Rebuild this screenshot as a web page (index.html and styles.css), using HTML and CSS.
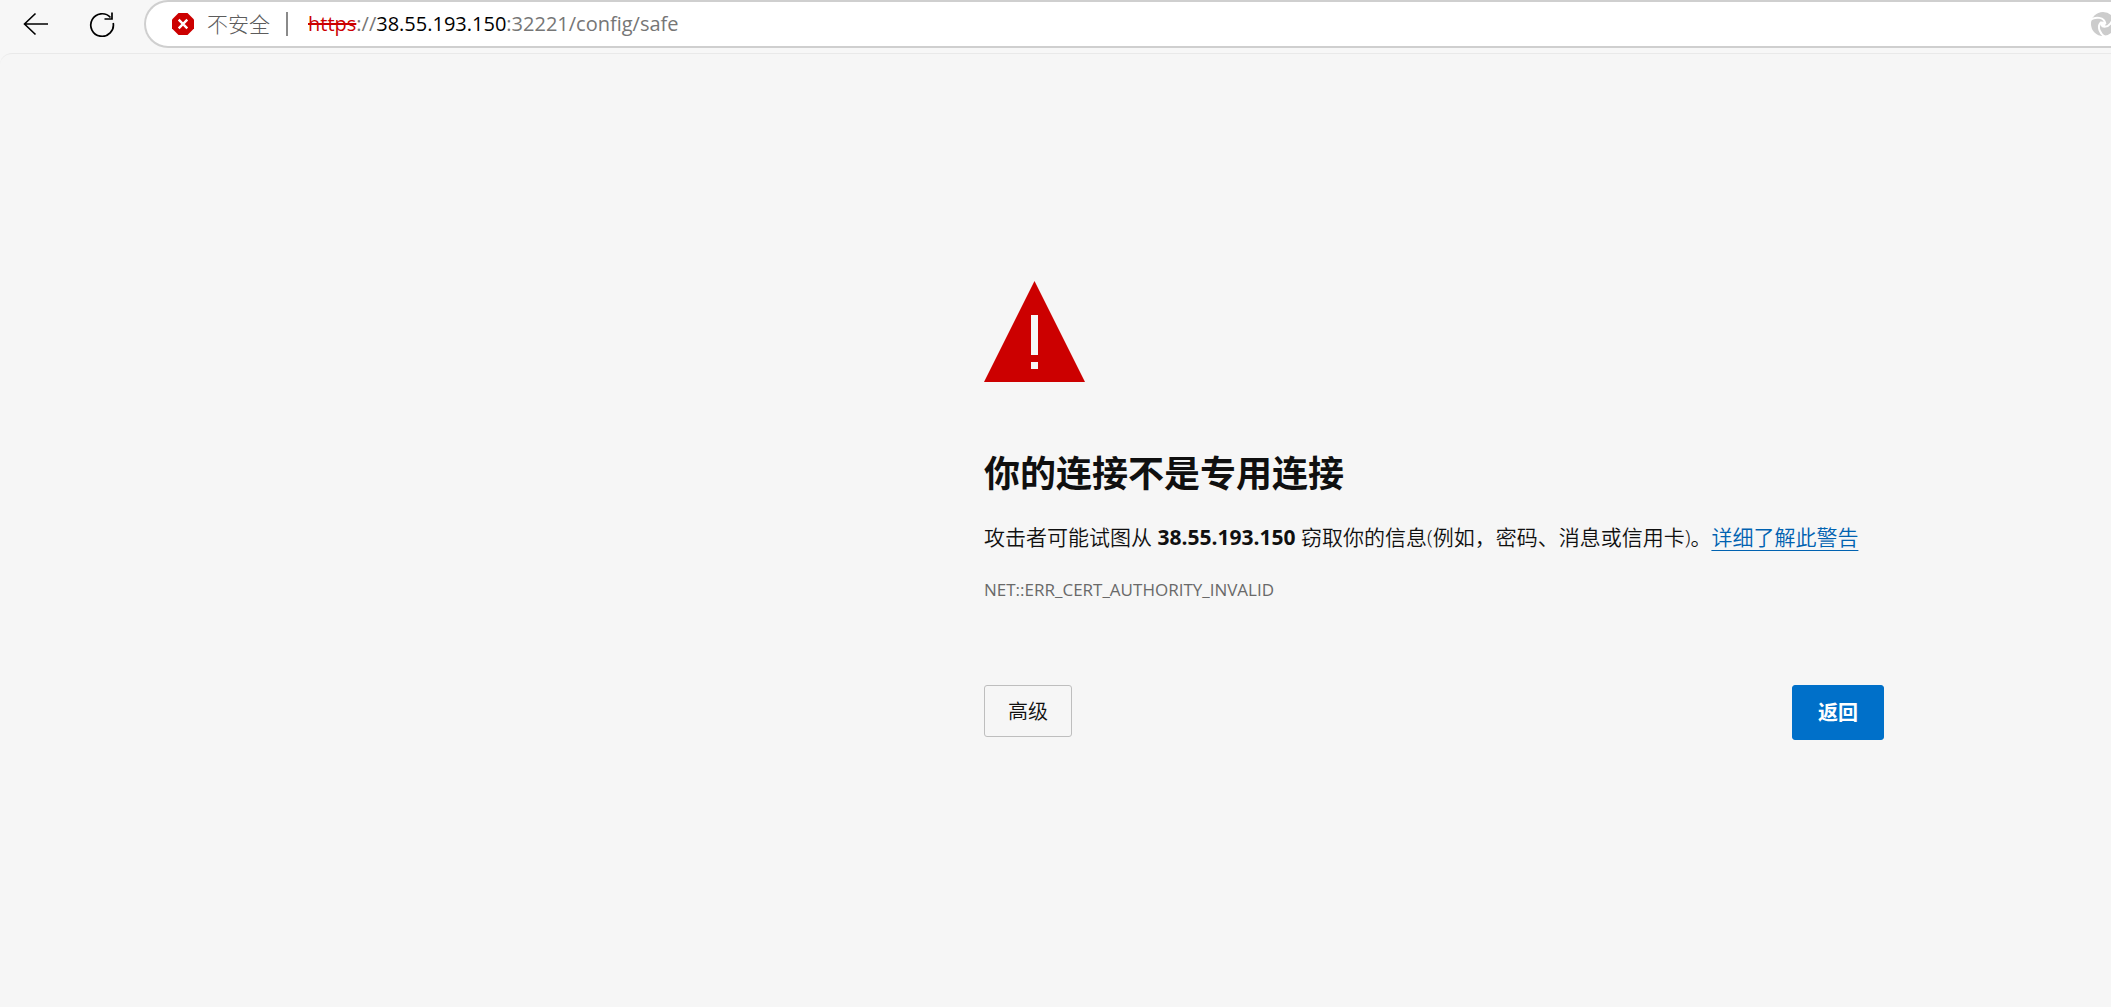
FILE: index.html
```
<!DOCTYPE html>
<html lang="zh-CN">
<head>
  <meta charset="UTF-8" />
  <meta name="viewport" content="width=device-width, initial-scale=1.0"/>
  <title>隐私错误</title>
  <link rel="stylesheet" href="styles.css">
</head>
<body>

  <header class="toolbar">
    <button class="nav-button" type="button" aria-label="后退">
      <svg width="26" height="26" viewBox="0 0 26 26" fill="none" stroke="#000" stroke-width="1.6">
        <path d="M12.5 2.5 1.5 13l11 10.5M1.5 13H25"/>
      </svg>
    </button>
    <button class="nav-button" type="button" aria-label="刷新">
      <svg width="26" height="26" viewBox="0 0 26 26" fill="none" stroke="#000" stroke-width="1.7">
        <path d="M24.2 12A11.3 11.3 0 1 1 21.5 6.5M23 1.5V8h-7.5"/>
      </svg>
    </button>

    <div class="address-bar">
      <button class="security" type="button">
        <svg width="22" height="22" viewBox="0 0 22 22">
          <path fill="#c00" d="M6.5 0h9L22 6.5v9L15.5 22h-9L0 15.5v-9z"/>
          <path stroke="#fff" stroke-width="2.4" d="m6.7 6.7 8.6 8.6m0-8.6-8.6 8.6"/>
        </svg>
        <span>不安全</span>
      </button>
      <div class="url" role="textbox" aria-label="地址" contenteditable="true" spellcheck="false"><span class="scheme">https</span>://<span class="host">38.55.193.150</span>:32221/config/safe</div>
      <!-- cut off by the window edge -->
      <svg class="swirl" width="24" height="24" viewBox="0 0 24 24">
        <circle cx="12" cy="12" r="12" fill="#ccc"/>
        <g fill="none" stroke="#fff" stroke-width="2">
          <path d="M-1 8C4 4.5 13.5 4.5 14.5 12"/>
          <path d="M-1 8C4 4.5 13.5 4.5 14.5 12" transform="rotate(120 12 12)"/>
          <path d="M-1 8C4 4.5 13.5 4.5 14.5 12" transform="rotate(240 12 12)"/>
        </g>
        <circle cx="12" cy="12" r="2.6" fill="#fff"/>
      </svg>
    </div>
  </header>

  <main class="page">
    <div class="interstitial">
      <svg class="warning-icon" width="101" height="101" viewBox="0 0 101 101">
        <path fill="#c00" d="M50.5 0 101 101H0z"/>
        <path fill="#f6f6f6" d="M47 34h7v40h-7zM47 81h7v7h-7z"/>
      </svg>
      <h1>你的连接不是专用连接</h1>
      <p class="message">攻击者可能试图从 <strong>38.55.193.150</strong> 窃取你的信息(例如，密码、消息或信用卡)。<a href="#">详细了解此警告</a></p>
      <p class="error-code">NET::ERR_CERT_AUTHORITY_INVALID</p>
      <div class="actions">
        <button class="btn" type="button">高级</button>
        <button class="btn btn-primary" type="button">返回</button>
      </div>
    </div>
  </main>

</body>
</html>
```
FILE: styles.css
```
* {
  box-sizing: border-box;
}

body {
  margin: 0;
  min-height: 100vh;
  display: flex;
  flex-direction: column;
  overflow-x: hidden;
  background: #f7f7f7;
  color: #101010;
  font-family: "Open Sans", "Noto Sans CJK SC", sans-serif;
}

button {
  font-family: inherit;
  cursor: pointer;
}

svg {
  display: block;
  flex-shrink: 0;
}

.toolbar {
  display: flex;
  align-items: center;
  height: 48px;
  padding-left: 23px;
  margin-bottom: 5px;
}

.nav-button {
  padding: 0;
  margin-right: 40px;
  border: none;
  background: none;
}

.nav-button + .address-bar {
  margin-left: -11px;
}

.address-bar {
  flex: 1;
  display: flex;
  align-items: center;
  height: 48px;
  padding-left: 26px;
  border: 2px solid #cfcfcf;
  border-right: none;
  border-radius: 24px 0 0 24px;
  background: #fff;
  overflow: hidden;
}

.security {
  display: flex;
  align-items: center;
  gap: 13px;
  height: 24px;
  padding: 0 16px 0 0;
  border: none;
  border-right: 2px solid #8a8a8a;
  background: none;
  color: #5c5c5c;
  font-size: 21px;
  font-weight: 300;
  line-height: 24px;
}

.url {
  flex: 1;
  padding-left: 20px;
  color: #767676;
  font-size: 20px;
  line-height: 28px;
  white-space: nowrap;
  outline: none;
}

.scheme {
  color: #c00;
  text-decoration: line-through;
  text-decoration-thickness: 2px;
}

.host {
  color: #000;
}

.swirl {
  margin-right: -4px;
}

.page {
  flex: 1;
  padding: 227px 227px 40px 40px;
  border-top: 1px solid #e9e9e9;
  border-radius: 12px 0 0 0;
  background: #f6f6f6;
}

.interstitial {
  max-width: 900px;
  margin-left: auto;
}

h1 {
  margin: 68px 0 24px;
  font-size: 36px;
  line-height: 48px;
}

p {
  margin: 0;
}

.message {
  font-size: 21px;
  font-weight: 350;
  line-height: 30px;
}

.message strong {
  font-weight: 700;
}

.message a {
  color: #0062b1;
  text-decoration: underline;
  text-decoration-thickness: 1px;
  text-underline-offset: 5px;
}

.error-code {
  margin-top: 26px;
  color: #696969;
  font-size: 17px;
  line-height: 24px;
}

.actions {
  display: flex;
  align-items: flex-start;
  justify-content: space-between;
  margin-top: 83px;
}

.btn {
  padding: 11px 23px 9px;
  border: 1px solid #bebebe;
  border-radius: 3px;
  background: none;
  color: #101010;
  font-size: 20px;
  font-weight: 350;
  line-height: 30px;
}

.btn-primary {
  padding: 12px 25px 11px;
  border-color: #0070c9;
  background: #0070c9;
  color: #fff;
  font-weight: 700;
}
```
